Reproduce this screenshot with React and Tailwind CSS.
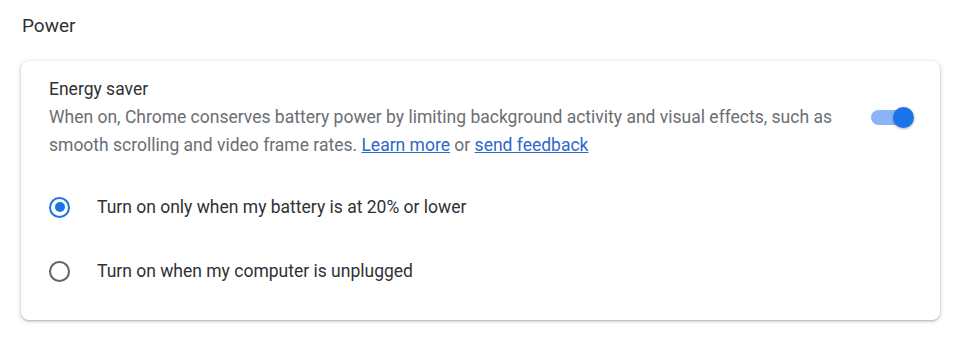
import React, { useState } from 'react';

const options = [
  { id: 'battery', label: 'Turn on only when my battery is at 20% or lower' },
  { id: 'unplugged', label: 'Turn on when my computer is unplugged' },
];

const Radio = ({ checked }) => (
  <span
    className={`flex items-center justify-center w-[21px] h-[21px] rounded-full border-[2.5px] flex-shrink-0 ${
      checked ? 'border-[#1a73e8]' : 'border-[#5f6368]'
    }`}
  >
    {checked && <span className="w-[10px] h-[10px] rounded-full bg-[#1a73e8]" />}
  </span>
);

const App = () => {
  const [enabled, setEnabled] = useState(true);
  const [mode, setMode] = useState('battery');

  return (
    <div
      className="w-[960px] h-[338px] bg-white px-[21px] pt-[12px] text-[#202124]"
      style={{ fontFamily: 'Roboto, "Liberation Sans", sans-serif' }}
    >
      {/* Section title */}
      <h2 className="text-[19px] leading-[28px] pl-[1px] text-[#303134]">Power</h2>

      {/* Card */}
      <div className="mt-[21px] w-[919px] bg-white rounded-[8px] shadow-[0_1px_2px_rgba(60,64,67,0.3),0_1px_4px_1px_rgba(60,64,67,0.15)] pl-[28px] pr-[26px] pt-[14px] pb-[17px]">
        <div className="flex items-center">
          <div className="flex-1 min-w-0 pr-[20px]">
            <div className="text-[17.5px] leading-[28px] text-[#303134]">Energy saver</div>
            <div className="text-[17.5px] leading-[28px] text-[#6b6e72]">
              When on, Chrome conserves battery power by limiting background activity and visual effects, such as
              smooth scrolling and video frame rates.{' '}
              <a href="#" className="text-[#2d68c9] underline">Learn more</a> or{' '}
              <a href="#" className="text-[#2d68c9] underline">send feedback</a>
            </div>
          </div>

          {/* Toggle */}
          <button
            onClick={() => setEnabled(!enabled)}
            className="relative w-[43px] h-[21px] flex items-center flex-shrink-0"
          >
            <span className={`w-[40px] h-[15px] rounded-full ${enabled ? 'bg-[#8ab4f8]' : 'bg-[#bdc1c6]'}`} />
            <span
              className={`absolute top-0 w-[21px] h-[21px] rounded-full shadow-[0_1px_3px_rgba(0,0,0,0.3)] ${
                enabled ? 'right-0 bg-[#1a73e8]' : 'left-0 bg-white'
              }`}
            />
          </button>
        </div>

        {/* Options */}
        <div className="mt-[16px]">
          {options.map((opt) => (
            <div
              key={opt.id}
              className="flex items-center h-[64px] cursor-pointer"
              onClick={() => setMode(opt.id)}
            >
              <Radio checked={mode === opt.id} />
              <span className="ml-[27px] text-[17.5px] text-[#303134]">{opt.label}</span>
            </div>
          ))}
        </div>
      </div>
    </div>
  );
};

export default App;
